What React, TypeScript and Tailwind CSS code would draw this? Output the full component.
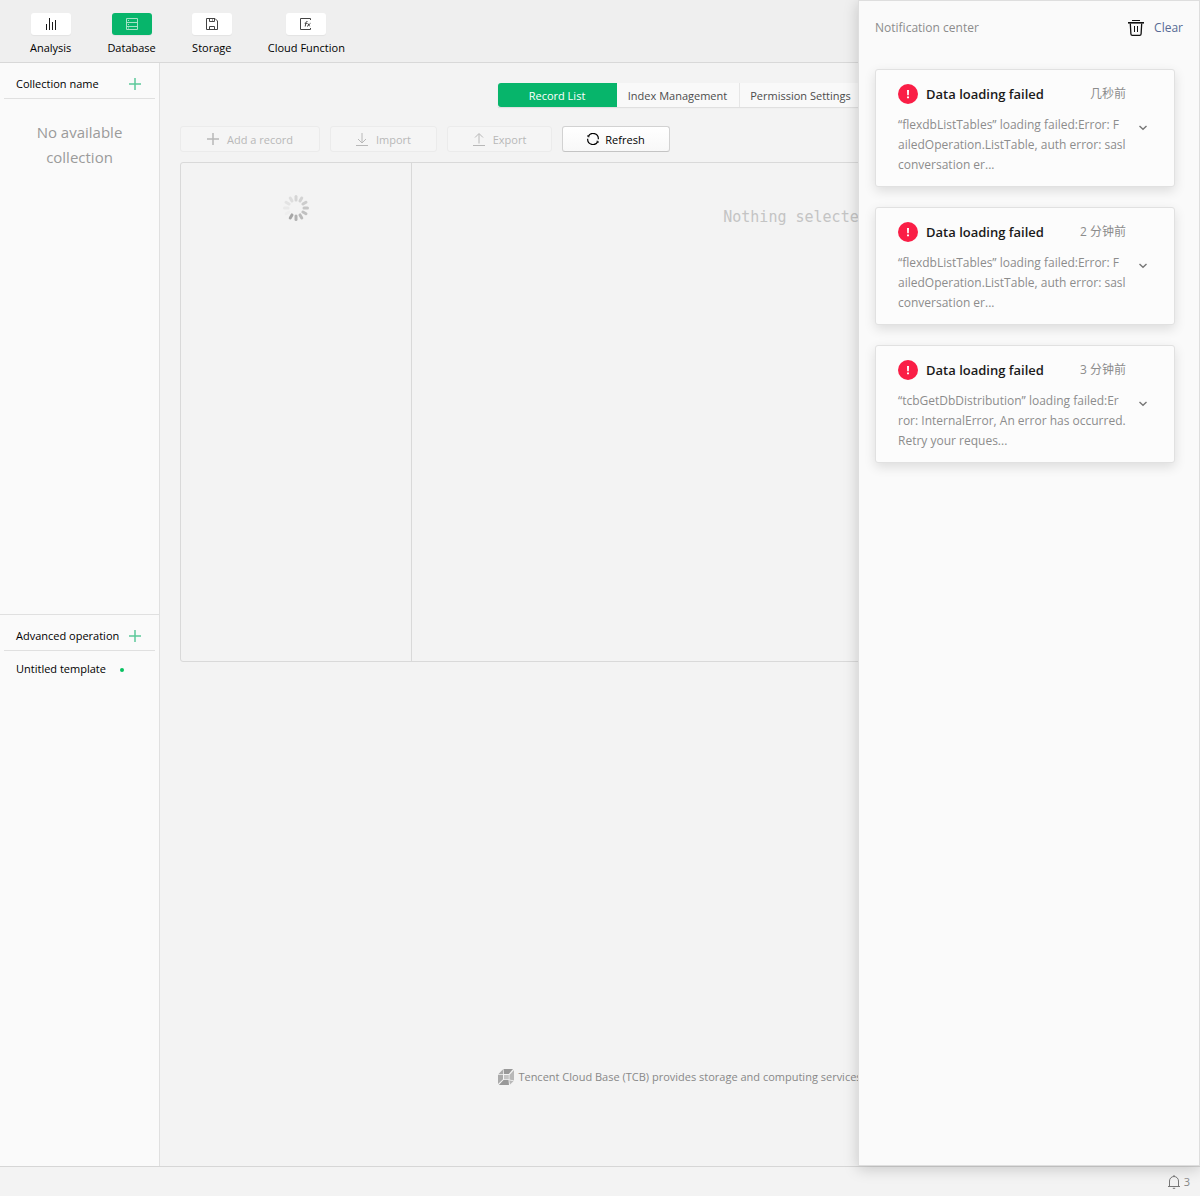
import type { ReactNode } from 'react';
import { clsx } from 'clsx';

type IconProps = { className?: string };

function AnalysisIcon() {
  return (
    <svg width="12" height="12" viewBox="0 0 12 12" fill="#1a1a1a" aria-hidden="true">
      <rect x="1" y="6" width="1" height="6" />
      <rect x="4" y="0" width="1" height="12" />
      <rect x="7" y="4" width="1" height="8" />
      <rect x="10" y="2" width="1" height="10" />
    </svg>
  );
}

function DatabaseIcon() {
  return (
    <svg width="12" height="12" viewBox="0 0 12 12" fill="none" stroke="#a6e3c6" aria-hidden="true">
      <path d="M.5.5h11v11H.5zM.5 4.5h11M.5 8.5h11" />
      <path d="M2 2.5h1M2 6.5h1M2 10h1" />
    </svg>
  );
}

function StorageIcon() {
  return (
    <svg width="12" height="12" viewBox="0 0 12 12" fill="none" stroke="#444" aria-hidden="true">
      <path d="M.5.5H9l2.500 2.500v8.500H.5z" />
      <path d="M3.500.5v3h5v-3M6.500 1.500v1M3.500 11.500v-3h5v3" />
    </svg>
  );
}

function FunctionIcon() {
  return (
    <svg width="12" height="12" viewBox="0 0 12 12" fill="none" stroke="#444" aria-hidden="true">
      <path d="M10.500 2V.5H.5v11h10V10" />
      <path d="M7.500 3.500c-1.200-.4-1.500.5-1.700 1.800L5.200 8.500M4.700 5.300h2.500M7.700 5.300l2 3M10.500 5.300 7 8.500" />
    </svg>
  );
}

function PlusIcon({ className }: IconProps) {
  return (
    <svg width="12" height="12" viewBox="0 0 12 12" className={className} aria-hidden="true">
      <path d="M6 0v12M0 6h12" stroke="currentColor" strokeWidth="1.500" />
    </svg>
  );
}

function ImportIcon() {
  return (
    <svg width="12" height="13" viewBox="0 0 12 13" fill="none" stroke="currentColor" aria-hidden="true">
      <path d="M6 0v9.500M2 6l4 4 4-4M0 12.500h12" />
    </svg>
  );
}

function ExportIcon() {
  return (
    <svg width="12" height="13" viewBox="0 0 12 13" fill="none" stroke="currentColor" aria-hidden="true">
      <path d="M6 10.500V1M2 4.500l4-4 4 4M0 12.500h12" />
    </svg>
  );
}

function RefreshIcon() {
  return (
    <svg width="12" height="12" viewBox="0 0 12 12" fill="none" stroke="currentColor" strokeWidth="1.200" aria-hidden="true">
      <path d="M1.200 3.600A5.300 5.300 0 0 1 11.300 6.300M.7 5.700A5.300 5.300 0 0 0 10.800 8.400" />
      <path d="M.8 2v1.800h1.800M11.200 10V8.200H9.400" strokeWidth=".7" />
    </svg>
  );
}

function TrashIcon() {
  return (
    <svg width="16" height="16" viewBox="0 0 16 16" fill="none" stroke="#111" aria-hidden="true">
      <path d="M4 .5h8" />
      <path d="M0 2.800h16" strokeWidth="1.600" />
      <path d="M2.300 3.500l.6 10.500q.1 1.300 1.400 1.300h7.400q1.300 0 1.400-1.300l.6-10.500" strokeWidth="1.300" />
      <path d="M6.500 6v6M9.500 6v6" />
    </svg>
  );
}

function BellIcon() {
  return (
    <svg width="12" height="14" viewBox="0 0 12 14" fill="none" stroke="#777" aria-hidden="true">
      <path d="M1.500 11.500v-5.500a4.500 4.500 0 0 1 9 0v5.500M0 11.500h12M6 0v1.500M4.800 13.300h2.400" />
    </svg>
  );
}

function AlertIcon() {
  return (
    <svg width="20" height="20" viewBox="0 0 20 20" aria-hidden="true">
      <circle cx="10" cy="10" r="10" fill="#fa1e46" />
      <path d="M9 6h2l-.2 5.200H9.200zM9 12.400h2v1.800H9z" fill="#fff" />
    </svg>
  );
}

function CloudBaseIcon() {
  return (
    <svg width="16" height="16" viewBox="0 0 16 16" aria-hidden="true">
      <path d="M5.500 0H15l-4.200 5H6z" fill="#999" />
      <path d="M16 1v10.500l-4.500-1V6z" fill="#b8b8b8" />
      <path d="M4.800 .5 5.200 5H.5zM0 5.800h5v4.500L0 15z" fill="#aaa" />
      <path d="M6 6h4.800v4.300H6z" fill="#c4c4c4" />
      <path d="M5.500 11h5l.5 5H.8z" fill="#999" />
      <path d="M11.300 11.300l4.200 1L12 15.600z" fill="#b8b8b8" />
    </svg>
  );
}

// petals run clockwise from 12 o'clock
const PETAL_OPACITY = [0.38, 0.42, 0.5, 0.58, 0.66, 0.74, 0.84, 1, 0.05, 0.12, 0.2, 0.28];

function Spinner() {
  return (
    <svg width="26" height="26" viewBox="0 0 26 26" role="img" aria-label="Loading">
      {PETAL_OPACITY.map((opacity, i) => (
        <rect
          key={i}
          x="11.500"
          y="0"
          width="3"
          height="6.500"
          rx="1.500"
          fill="#a6a6a6"
          opacity={opacity}
          transform={`rotate(${i * 30} 13 13)`}
        />
      ))}
    </svg>
  );
}

const NAV_ITEMS = [
  { label: 'Analysis', icon: <AnalysisIcon /> },
  { label: 'Database', icon: <DatabaseIcon />, active: true },
  { label: 'Storage', icon: <StorageIcon /> },
  { label: 'Cloud Function', icon: <FunctionIcon /> },
];

const TABS = ['Record List', 'Index Management', 'Permission Settings'];

const TABLES_ERROR = [
  '“flexdbListTables” loading failed:Error: F',
  'ailedOperation.ListTable, auth error: sasl',
  'conversation er...',
];

const NOTIFICATIONS = [
  { id: 1, time: '几秒前', lines: TABLES_ERROR },
  { id: 2, time: '2 分钟前', lines: TABLES_ERROR },
  {
    id: 3,
    time: '3 分钟前',
    lines: [
      '“tcbGetDbDistribution” loading failed:Er',
      'ror: InternalError, An error has occurred.',
      'Retry your reques...',
    ],
  },
];

function ToolButton({
  icon,
  label,
  disabled,
  className,
}: {
  icon: ReactNode;
  label: string;
  disabled?: boolean;
  className?: string;
}) {
  return (
    <button
      type="button"
      disabled={disabled}
      className={clsx(
        'flex h-[26px] items-center justify-center rounded-[3px] border',
        disabled
          ? 'gap-2 border-[#ebebeb] bg-[#f5f5f5] text-[#b8b8b8]'
          : 'gap-1.5 border-[#d2d2d2] border-b-[#c4c4c4] bg-linear-to-b from-white to-[#f8f8f8] text-black',
        className
      )}
    >
      {icon}
      <span className="pt-0.5">{label}</span>
    </button>
  );
}

function SectionHeader({ title, action }: { title: string; action: string }) {
  return (
    <div className="mx-1 flex h-9 items-center justify-between border-b border-[#e0e0e0] pt-1.5 pr-3.5 pl-3">
      <h2 className="whitespace-nowrap">{title}</h2>
      <button type="button" aria-label={action} className="shrink-0 text-[#5cc99a]">
        <PlusIcon />
      </button>
    </div>
  );
}

function NotificationCard({ time, lines }: { time: string; lines: string[] }) {
  return (
    <article className="rounded-[3px] border border-[#e1e1e1] bg-[#fcfcfc] pt-3 pr-[26px] pb-[11px] pl-[22px] shadow-[0_4px_12px_rgba(0,0,0,0.12)]">
      <header className="flex h-6 items-center pr-[22px]">
        <AlertIcon />
        <h3 className="ml-2 text-[13px] font-semibold text-[#1a1a1a]">Data loading failed</h3>
        <time className="ml-auto text-xs text-[#8c8c8c]">{time}</time>
      </header>
      <div className="mt-[9px] flex items-start justify-between">
        <p className="text-xs leading-5 whitespace-pre text-[#8c8c8c]">{lines.join('\n')}</p>
        <button type="button" aria-label="Expand" className="mt-2.5">
          <svg width="10" height="6" viewBox="0 0 10 6" fill="none" stroke="#777" strokeWidth="1.400" aria-hidden="true">
            <path d="M1.500 1 5 4.300 8.500 1" />
          </svg>
        </button>
      </div>
    </article>
  );
}

export default function App() {
  return (
    <div className="relative flex min-h-screen flex-col overflow-hidden bg-[#f3f3f3] font-['Open_Sans','Noto_Sans_CJK_SC',sans-serif] text-[11px] leading-4 text-black">
      <nav className="flex h-[63px] items-start gap-9 border-b border-[#d8d8d8] bg-[#efefef] px-[30px] pt-[13px]">
        {NAV_ITEMS.map(({ label, icon, active }) => (
          <button key={label} type="button" className="flex flex-col items-center gap-[5px]">
            <span
              className={clsx(
                'flex h-[22px] w-10 items-center justify-center rounded-[3px] shadow-[0_1px_1px_rgba(0,0,0,0.05)]',
                active ? 'bg-[#07b56b]' : 'bg-white'
              )}
            >
              {icon}
            </span>
            {label}
          </button>
        ))}
      </nav>

      <div className="flex flex-1">
        <aside className="flex w-40 shrink-0 flex-col border-r border-[#e0e0e0] bg-[#fafafa]">
          <section className="flex-1 border-b border-[#e0e0e0]">
            <SectionHeader title="Collection name" action="Add collection" />
            <p className="mt-[21px] px-8 text-center text-[15px] leading-[25px] text-[#9b9b9b]">
              No available collection
            </p>
          </section>
          <section className="flex-1">
            <SectionHeader title="Advanced operation" action="Add template" />
            <a href="#template" className="flex h-9 items-center px-4">
              Untitled template
              <span className="mt-0.5 ml-3.5 size-1 rounded-full bg-[#07c160]" />
            </a>
          </section>
        </aside>

        <main className="flex min-w-0 flex-1 flex-col px-5 pt-5">
          <div role="tablist" className="mx-auto flex h-6 shadow-[0_1px_1px_rgba(0,0,0,0.08)]">
            {TABS.map((tab, i) => (
              <button
                key={tab}
                type="button"
                role="tab"
                aria-selected={i === 0}
                className={clsx(
                  'pt-0.5 whitespace-nowrap',
                  i === 0
                    ? 'w-[119px] rounded-l-[3px] bg-[#07b56b] text-white'
                    : 'w-[123px] border-r border-[#e6e6e6] bg-[#f9f9f9] text-[#4c4c4c]'
                )}
              >
                {tab}
              </button>
            ))}
          </div>

          <div className="mt-[19px] flex gap-2.5">
            <ToolButton disabled icon={<PlusIcon />} label="Add a record" className="w-[140px]" />
            <ToolButton disabled icon={<ImportIcon />} label="Import" className="w-[107px]" />
            <ToolButton disabled icon={<ExportIcon />} label="Export" className="w-[105px]" />
            <ToolButton icon={<RefreshIcon />} label="Refresh" className="w-[108px]" />
          </div>

          <div className="mt-2.5 flex h-[500px] rounded-[3px] border border-[#d9d9d9]">
            <div className="flex w-[231px] shrink-0 items-start justify-center border-r border-[#d9d9d9] pt-8">
              <Spinner />
            </div>
            <p className="flex-1 pt-[42px] text-center font-['DejaVu_Sans_Mono',monospace] text-[15px] leading-6 text-[#c4c4c4]">
              Nothing selected
            </p>
          </div>

          <p className="mt-auto mb-20 flex items-center justify-center gap-1 leading-[18px] text-[#888]">
            <CloudBaseIcon />
            Tencent Cloud Base (TCB) provides storage and computing services
          </p>
        </main>
      </div>

      <footer className="flex h-[30px] items-center justify-end border-t border-[#d6d6d6] pr-2.5">
        <button type="button" aria-label="3 notifications" className="flex items-center gap-1 text-[#888]">
          <BellIcon />3
        </button>
      </footer>

      <aside className="absolute top-0 right-0 bottom-[30px] w-[342px] border border-[#dedede] bg-[#fafafa] pr-6 pl-4 shadow-[0_3px_14px_rgba(0,0,0,0.18)]">
        <header className="-mr-2 flex h-[54px] items-center justify-between text-xs">
          <h2 className="text-[#8c8c8c]">Notification center</h2>
          <button type="button" className="flex items-center gap-2.5 text-[#576b95]">
            <TrashIcon />
            Clear
          </button>
        </header>
        <div className="mt-3.5 flex flex-col gap-5">
          {NOTIFICATIONS.map((item) => (
            <NotificationCard key={item.id} time={item.time} lines={item.lines} />
          ))}
        </div>
      </aside>
    </div>
  );
}
